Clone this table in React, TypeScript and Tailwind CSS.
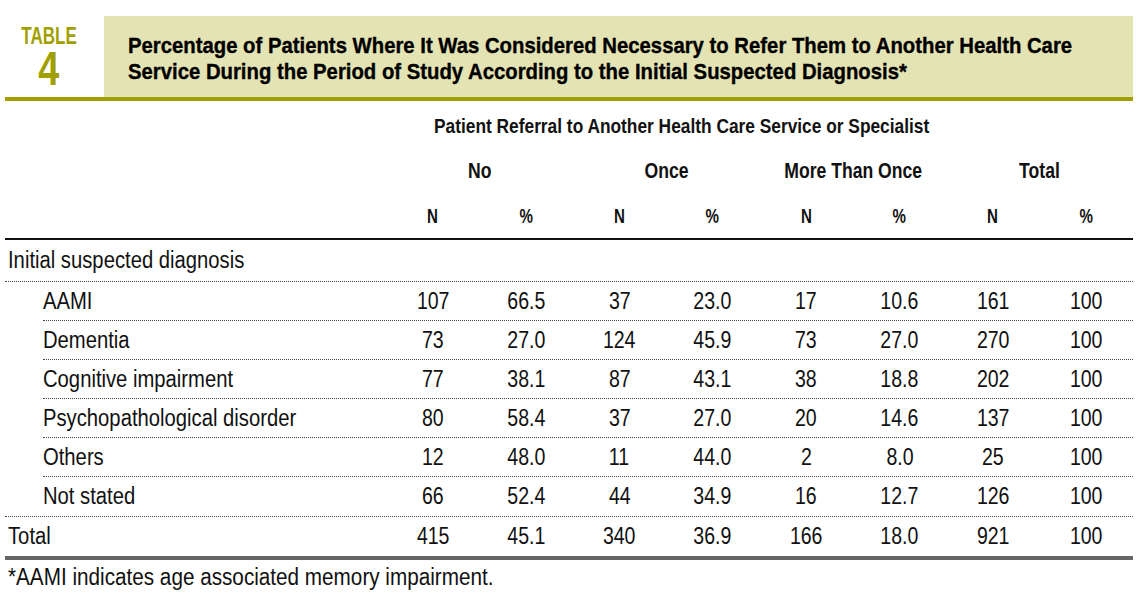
import type { ReactNode } from 'react';

const rows = [
  { label: 'AAMI', v: ['107', '66.5', '37', '23.0', '17', '10.6', '161', '100'] },
  { label: 'Dementia', v: ['73', '27.0', '124', '45.9', '73', '27.0', '270', '100'] },
  { label: 'Cognitive impairment', v: ['77', '38.1', '87', '43.1', '38', '18.8', '202', '100'] },
  { label: 'Psychopathological disorder', v: ['80', '58.4', '37', '27.0', '20', '14.6', '137', '100'] },
  { label: 'Others', v: ['12', '48.0', '11', '44.0', '2', '8.0', '25', '100'] },
];

const notStated = ['66', '52.4', '44', '34.9', '16', '12.7', '126', '100'];
const total = ['415', '45.1', '340', '36.9', '166', '18.0', '921', '100'];

// condensed look: Liberation Sans squeezed horizontally
function Sq({ children, className }: { children: ReactNode; className: string }) {
  return <span className={`inline-block whitespace-nowrap ${className}`}>{children}</span>;
}

function Cells({ values }: { values: string[] }) {
  return (
    <>
      {values.map((v, i) => (
        <div key={i} className="text-center">
          <Sq className="scale-x-[0.85]">{v}</Sq>
        </div>
      ))}
    </>
  );
}

function Label({ children }: { children: ReactNode }) {
  return <Sq className="scale-x-[0.88] origin-left">{children}</Sq>;
}

export default function App() {
  return (
    <div className="w-[1145px] h-[612px] bg-white text-[#111] font-['Liberation_Sans',Arial,sans-serif] overflow-hidden">
      {/* Title banner */}
      <div className="pl-[5px] pr-[12px] pt-[16px]">
        <div className="flex h-[81px]">
          <div className="w-[99px] shrink-0 pr-[11px] flex flex-col items-center pt-[8px] font-bold text-[#a19f00]">
            <div className="text-[24px] leading-[24px]">
              <Sq className="scale-x-[0.71]">TABLE</Sq>
            </div>
            <div className="text-[49px] leading-[40px]">
              <Sq className="scale-x-[0.77]">4</Sq>
            </div>
          </div>
          <div className="flex-1 min-w-0 bg-[#e4e3b4] pl-[24px] pt-[17px] font-bold text-[22px] leading-[25.5px] text-black [-webkit-text-stroke:0.35px_black]">
            <div>
              <Sq className="scale-x-[0.923] origin-left">
                Percentage of Patients Where It Was Considered Necessary to Refer Them to Another Health Care
              </Sq>
            </div>
            <div>
              <Sq className="scale-x-[0.923] origin-left">
                Service During the Period of Study According to the Initial Suspected Diagnosis*
              </Sq>
            </div>
          </div>
        </div>
        <div className="h-[4px] bg-[#a19f00]" />
      </div>

      {/* Table */}
      <div className="pl-[5px] pr-[12px]">
        <div className="pt-[2px] font-bold text-[21px]">
          <div className="grid grid-cols-[381px_repeat(8,minmax(0,1fr))] h-[45px] items-center">
            <div />
            <div className="col-span-8 pl-[48px]">
              <Sq className="scale-x-[0.825] origin-left">
                Patient Referral to Another Health Care Service or Specialist
              </Sq>
            </div>
          </div>
          <div className="grid grid-cols-[381px_repeat(8,minmax(0,1fr))] h-[45px] items-center text-[22px]">
            <div />
            <div className="col-span-2 text-center">
              <Sq className="scale-x-[0.8]">No</Sq>
            </div>
            <div className="col-span-2 text-center">
              <Sq className="scale-x-[0.8]">Once</Sq>
            </div>
            <div className="col-span-2 text-center">
              <Sq className="scale-x-[0.8]">More Than Once</Sq>
            </div>
            <div className="col-span-2 text-center">
              <Sq className="scale-x-[0.8]">Total</Sq>
            </div>
          </div>
          <div className="grid grid-cols-[381px_repeat(8,minmax(0,1fr))] h-[45px] items-center">
            <div />
            {['N', '%', 'N', '%', 'N', '%', 'N', '%'].map((h, i) => (
              <div key={i} className="text-center">
                <Sq className="scale-x-[0.72]">{h}</Sq>
              </div>
            ))}
          </div>
        </div>
        <div className="h-[2px] bg-[#111]" />

        <div className="text-[23px]">
          <div className="h-[42px] flex items-center pl-[3px] border-b border-dotted border-[#444]">
            <Label>Initial suspected diagnosis</Label>
          </div>
          {rows.map((r) => (
            <div
              key={r.label}
              className="ml-[38px] grid grid-cols-[343px_repeat(8,minmax(0,1fr))] h-[39px] items-center border-b border-dotted border-[#444]"
            >
              <div>
                <Label>{r.label}</Label>
              </div>
              <Cells values={r.v} />
            </div>
          ))}
          <div className="grid grid-cols-[381px_repeat(8,minmax(0,1fr))] h-[40px] items-center border-b border-dotted border-[#444]">
            <div className="pl-[38px]">
              <Label>Not stated</Label>
            </div>
            <Cells values={notStated} />
          </div>
          <div className="grid grid-cols-[381px_repeat(8,minmax(0,1fr))] h-[39px] items-center">
            <div className="pl-[3px]">
              <Label>Total</Label>
            </div>
            <Cells values={total} />
          </div>
        </div>
        <div className="h-[4px] bg-[#666]" />
        <div className="pt-[3px] pl-[3px] text-[23px] leading-[28px]">
          <Sq className="scale-x-[0.9] origin-left">*AAMI indicates age associated memory impairment.</Sq>
        </div>
      </div>
    </div>
  );
}
